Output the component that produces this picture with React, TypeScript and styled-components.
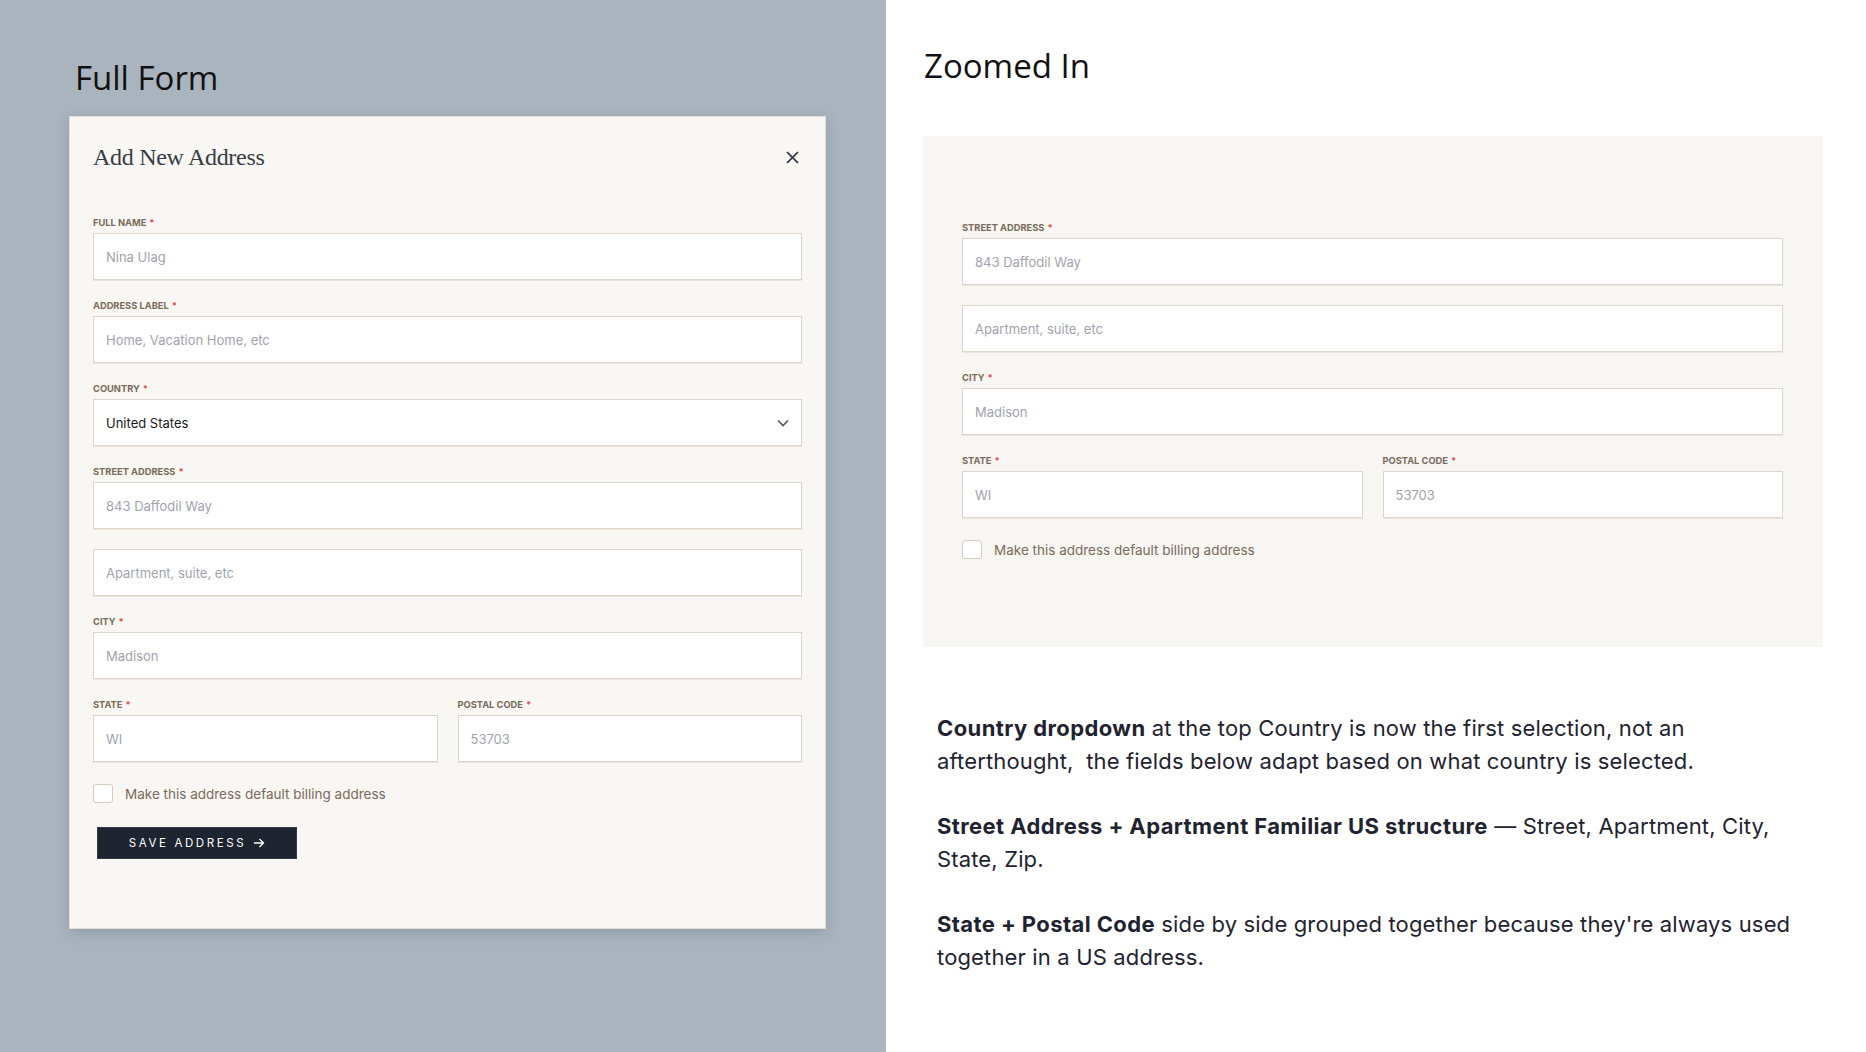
import React from "react";
import styled, { createGlobalStyle } from "styled-components";

const GlobalStyle = createGlobalStyle`
  * {
    box-sizing: border-box;
  }
  html,
  body {
    margin: 0;
    padding: 0;
    background: #ffffff;
  }
  body {
    font-family: "Inter", "Liberation Sans", sans-serif;
  }
`;

const Page = styled.div`
  display: grid;
  grid-template-columns: 886px 1fr;
  height: 1052px;
  overflow: hidden;
`;

const LeftPanel = styled.section`
  background-color: #aab4be;
  padding: 58px 0 0 69px;
`;

const RightPanel = styled.section`
  background-color: #ffffff;
  padding: 46px 43px 0 37px;
`;

const SectionTitle = styled.h1`
  margin: 0;
  font-family: "Open Sans", "Liberation Sans", sans-serif;
  font-weight: 400;
  font-size: 33px;
  line-height: 40px;
  color: #111111;
`;

const LeftTitle = styled(SectionTitle)`
  margin-left: 6px;
  margin-bottom: 18px;
`;

const RightTitle = styled(SectionTitle)`
  margin-left: 1px;
  margin-bottom: 50px;
`;

const ModalBx = styled.div`
  width: 757px;
  background-color: #f8f7f4;
  border: 1px solid #e3ddd4;
  box-shadow: 0 4px 14px rgba(40, 50, 60, 0.18);
  padding: 23px 23px 69px;
`;

const ModalHeader = styled.div`
  display: flex;
  align-items: center;
  justify-content: space-between;
  height: 34px;
  margin-bottom: 43px;
`;

const ModalTitle = styled.h2`
  margin: 0;
  font-family: "Liberation Serif", "DejaVu Serif", serif;
  font-weight: 400;
  font-size: 24px;
  letter-spacing: -0.3px;
  color: #3a3d44;
`;

const CloseBtn = styled.button`
  display: flex;
  align-items: center;
  justify-content: center;
  width: 24px;
  height: 24px;
  margin-right: -2px;
  padding: 0;
  border: none;
  background: none;
  color: #272c38;
  cursor: pointer;
`;

const FormStack = styled.div`
  display: flex;
  flex-direction: column;
  gap: 20px;
`;

const Field = styled.div`
  display: flex;
  flex-direction: column;
  min-width: 0;
`;

const Label = styled.label`
  display: block;
  height: 11px;
  margin-bottom: 5px;
  font-size: 9.3px;
  line-height: 11px;
  font-weight: 700;
  text-transform: uppercase;
  color: #7a6b5b;
`;

const Req = styled.span`
  margin-left: 3px;
  color: #d9534f;
`;

const TextInput = styled.input`
  width: 100%;
  height: 47px;
  padding: 0 12px;
  border: 1px solid #ddd5ca;
  border-radius: 0;
  background: #ffffff;
  box-shadow: 0 1px 0 #ebe6de;
  font-family: "Inter", "Liberation Sans", sans-serif;
  font-size: 13px;
  color: #1a1a1a;
  outline: none;
  &::placeholder {
    color: #9fa3ac;
  }
`;

const SelectBox = styled.div`
  display: flex;
  align-items: center;
  justify-content: space-between;
  height: 47px;
  padding: 0 12px;
  border: 1px solid #ddd5ca;
  background: #ffffff;
  box-shadow: 0 1px 0 #ebe6de;
  font-size: 13px;
  color: #1a1a1a;
  cursor: pointer;
`;

const TwoCol = styled.div`
  display: grid;
  grid-template-columns: 1fr 1fr;
  gap: 20px;
`;

const CheckRow = styled.label`
  display: flex;
  align-items: center;
  gap: 12px;
  margin-top: 22px;
  font-size: 13.5px;
  color: #7a6b5b;
  cursor: pointer;
`;

const CheckBox = styled.span`
  width: 20px;
  height: 19px;
  border: 1px solid #d5cbbf;
  border-radius: 3px;
  background: #ffffff;
`;

const SaveBtn = styled.button`
  display: flex;
  align-items: center;
  justify-content: center;
  gap: 7px;
  width: 200px;
  height: 32px;
  margin: 24px 0 0 4px;
  border: 1px solid #343b48;
  background-color: #1e2430;
  color: #ffffff;
  font-family: "Inter", "Liberation Sans", sans-serif;
  font-size: 11.5px;
  font-weight: 400;
  letter-spacing: 2.6px;
  cursor: pointer;
`;

const ZoomPanel = styled.div`
  width: 900px;
  background-color: #f7f6f3;
  padding: 86px 40px 88px 39px;
`;

const Notes = styled.div`
  padding: 65px 22px 0 14px;
  display: flex;
  flex-direction: column;
  gap: 32px;
`;

const Note = styled.p`
  margin: 0;
  font-family: "Inter", "Liberation Sans", sans-serif;
  font-size: 22px;
  line-height: 33px;
  color: #1f2330;
  letter-spacing: 0.15px;
  b {
    font-weight: 700;
    letter-spacing: 0.4px;
  }
`;

const XIcon = () => (
  <svg width="13" height="13" viewBox="0 0 13 13" fill="none">
    <path d="M1 1L12 12M12 1L1 12" stroke="currentColor" strokeWidth="1.7" />
  </svg>
);

const Chevron = () => (
  <svg width="12" height="8" viewBox="0 0 12 8" fill="none">
    <path d="M1 1.5L6 6.5L11 1.5" stroke="#4a5568" strokeWidth="1.6" />
  </svg>
);

const Arrow = () => (
  <svg width="12" height="10" viewBox="0 0 12 10" fill="none">
    <path d="M1 5H10.5M6.5 1L10.5 5L6.5 9" stroke="#ffffff" strokeWidth="1.3" />
  </svg>
);

const LabeledInput = (props: { label: string; placeholder: string }) => (
  <Field>
    <Label>
      {props.label}
      <Req>*</Req>
    </Label>
    <TextInput placeholder={props.placeholder} />
  </Field>
);

const AddressLines = () => (
  <>
    <LabeledInput label="Street Address" placeholder="843 Daffodil Way" />
    <TextInput placeholder="Apartment, suite, etc" />
    <LabeledInput label="City" placeholder="Madison" />
    <TwoCol>
      <LabeledInput label="State" placeholder="WI" />
      <LabeledInput label="Postal Code" placeholder="53703" />
    </TwoCol>
  </>
);

const DefaultCheck = () => (
  <CheckRow>
    <CheckBox />
    Make this address default billing address
  </CheckRow>
);

const App = () => {
  return (
    <>
      <GlobalStyle />
      <Page>
        <LeftPanel>
          <LeftTitle>Full Form</LeftTitle>
          <ModalBx>
            <ModalHeader>
              <ModalTitle>Add New Address</ModalTitle>
              <CloseBtn aria-label="Close">
                <XIcon />
              </CloseBtn>
            </ModalHeader>
            <FormStack>
              <LabeledInput label="Full Name" placeholder="Nina Ulag" />
              <LabeledInput
                label="Address Label"
                placeholder="Home, Vacation Home, etc"
              />
              <Field>
                <Label>
                  Country<Req>*</Req>
                </Label>
                <SelectBox>
                  United States
                  <Chevron />
                </SelectBox>
              </Field>
              <AddressLines />
            </FormStack>
            <DefaultCheck />
            <SaveBtn>
              SAVE ADDRESS
              <Arrow />
            </SaveBtn>
          </ModalBx>
        </LeftPanel>
        <RightPanel>
          <RightTitle>Zoomed In</RightTitle>
          <ZoomPanel>
            <FormStack>
              <AddressLines />
            </FormStack>
            <DefaultCheck />
          </ZoomPanel>
          <Notes>
            <Note>
              <b>Country dropdown</b> at the top Country is now the first
              selection, not an afterthought,&nbsp; the fields below adapt based
              on what country is selected.
            </Note>
            <Note>
              <b>Street Address + Apartment Familiar US structure</b> — Street,
              Apartment, City, State, Zip.
            </Note>
            <Note>
              <b>State + Postal Code</b> side by side grouped together because
              they're always used together in a US address.
            </Note>
          </Notes>
        </RightPanel>
      </Page>
    </>
  );
};

export default App;
